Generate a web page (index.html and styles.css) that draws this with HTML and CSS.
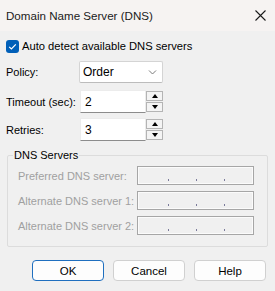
FILE: index.html
```html
<!DOCTYPE html>
<html>
<head>
<meta charset="utf-8">
<link rel="stylesheet" href="styles.css">
</head>
<body>
<div class="window">
  <div class="titlebar">
    <span class="title">Domain Name Server (DNS)</span>
    <svg class="close" width="11" height="11" viewBox="0 0 11 11"><path d="M0.5 0.5 L10.5 10.5 M10.5 0.5 L0.5 10.5" stroke="#1a1a1a" stroke-width="1.1" fill="none"/></svg>
  </div>
  <div class="content">
    <label class="check-row">
      <span class="checkbox"><svg width="13" height="13" viewBox="0 0 13 13"><path d="M3.2 6.8 L5.4 9 L9.8 4.3" stroke="#fff" stroke-width="1.2" fill="none"/></svg></span>
      <span class="check-label">Auto detect available DNS servers</span>
    </label>

    <div class="row row-policy">
      <span class="label">Policy:</span>
      <div class="select">
        <span>Order</span>
        <svg class="chev" width="9" height="5" viewBox="0 0 9 5"><path d="M1 0.5 L4.5 4 L8 0.5" stroke="#7a7a7a" stroke-width="1" fill="none"/></svg>
      </div>
    </div>

    <div class="row row-timeout">
      <span class="label">Timeout (sec):</span>
      <div class="spin">
        <div class="spin-input">2</div>
        <div class="spin-btns">
          <div class="spin-btn"><span class="tri-up"></span></div>
          <div class="spin-btn"><span class="tri-down"></span></div>
        </div>
      </div>
    </div>

    <div class="row row-retries">
      <span class="label">Retries:</span>
      <div class="spin">
        <div class="spin-input">3</div>
        <div class="spin-btns">
          <div class="spin-btn"><span class="tri-up"></span></div>
          <div class="spin-btn"><span class="tri-down"></span></div>
        </div>
      </div>
    </div>

    <fieldset class="group">
      <legend>DNS Servers</legend>
      <div class="ip-row">
        <span class="ip-label">Preferred DNS server:</span>
        <div class="ip-box"><i></i><i></i><i></i></div>
      </div>
      <div class="ip-row">
        <span class="ip-label">Alternate DNS server 1:</span>
        <div class="ip-box"><i></i><i></i><i></i></div>
      </div>
      <div class="ip-row">
        <span class="ip-label">Alternate DNS server 2:</span>
        <div class="ip-box"><i></i><i></i><i></i></div>
      </div>
    </fieldset>

    <div class="buttons">
      <div class="btn btn-default">OK</div>
      <div class="btn">Cancel</div>
      <div class="btn">Help</div>
    </div>
  </div>
</div>
</body>
</html>
```

FILE: styles.css
```css
html, body {
  margin: 0;
  padding: 0;
  background: #f0f0f0;
}
.window {
  width: 275px;
  height: 291px;
  background: #f0f0f0;
  font-family: "Liberation Sans", Arial, sans-serif;
  font-size: 11px;
  color: #000;
  overflow: hidden;
  box-sizing: border-box;
}
.titlebar {
  height: 31px;
  background: #f6f3f2;
  display: flex;
  align-items: center;
  justify-content: space-between;
  padding: 0 9px 0 6px;
  box-sizing: border-box;
}
.title {
  font-size: 11.6px;
  color: #1a1a1a;
  margin-top: -1px;
  white-space: nowrap;
}
.close {
  display: block;
  margin-top: -1px;
}
.content {
  padding: 0 6px;
}
.check-row {
  display: flex;
  align-items: center;
  height: 14px;
  margin-top: 8px;
}
.checkbox {
  width: 13px;
  height: 13px;
  background: #005fb8;
  border-radius: 3px;
  display: block;
  flex: none;
}
.checkbox svg { display: block; }
.check-label {
  margin-left: 3px;
  font-size: 11.2px;
  white-space: nowrap;
}
.row {
  display: flex;
  align-items: center;
}
.label {
  width: 73px;
  flex: none;
  white-space: nowrap;
}
.row-policy { margin-top: 8px; height: 22px; }
.row-timeout { margin-top: 7px; height: 23px; }
.row-retries { margin-top: 5px; height: 23px; }
.select {
  width: 84px;
  height: 22px;
  box-sizing: border-box;
  background: #fff;
  border: 1px solid #d4d4d4;
  border-bottom-color: #bcbcbc;
  border-radius: 2px;
  display: flex;
  align-items: center;
  justify-content: space-between;
  padding: 0 5px 0 3px;
  font-size: 12px;
}
.chev { display: block; }
.spin {
  display: flex;
  height: 23px;
  margin-left: 1px;
}
.spin-input {
  width: 66px;
  height: 23px;
  box-sizing: border-box;
  background: #fff;
  border: 1px solid #ececec;
  border-bottom: 1px solid #8c8c8c;
  padding: 1px 0 0 4px;
  display: flex;
  align-items: center;
  font-size: 12px;
}
.spin-btns {
  width: 17px;
  display: flex;
  flex-direction: column;
  gap: 1px;
  padding: 1px 0 1px 0;
  box-sizing: border-box;
}
.spin-btn {
  flex: 1;
  background: #f4f4f4;
  border: 1px solid #b4b4b4;
  display: flex;
  align-items: center;
  justify-content: center;
}
.tri-up {
  width: 0; height: 0;
  border-left: 3.5px solid transparent;
  border-right: 3.5px solid transparent;
  border-bottom: 4px solid #000;
}
.tri-down {
  width: 0; height: 0;
  border-left: 3.5px solid transparent;
  border-right: 3.5px solid transparent;
  border-top: 4px solid #000;
}
.group {
  margin: 7px 0 0 1px;
  width: 261px;
  height: 99px;
  box-sizing: border-box;
  border: 1px solid #dcdcdc;
  border-radius: 2px;
  padding: 4px 0 0 10px;
  font-size: 11px;
}
.group legend {
  padding: 0 1px;
  margin-left: -5px;
  line-height: 14px;
  font-size: 11px;
  color: #000;
}
.ip-row {
  display: flex;
  align-items: center;
  height: 19px;
  margin-bottom: 6px;
}
.ip-label {
  width: 119px;
  flex: none;
  color: #a0a0a0;
  white-space: nowrap;
}
.ip-box {
  width: 117px;
  height: 19px;
  box-sizing: border-box;
  border: 1px solid #a6a6a6;
  box-shadow: inset 0 0 0 1px #fbfbfb;
  position: relative;
}
.ip-box i {
  position: absolute;
  top: 12px;
  width: 1px;
  height: 2px;
  background: #7a7a9a;
}
.ip-box i:nth-child(1) { left: 30px; }
.ip-box i:nth-child(2) { left: 58px; }
.ip-box i:nth-child(3) { left: 86px; }
.buttons {
  display: flex;
  gap: 9px;
  margin: 13px 0 0 26px;
}
.btn {
  width: 72px;
  height: 21px;
  box-sizing: border-box;
  border: 1px solid #d0d0d0;
  border-radius: 4px;
  background: #fdfdfd;
  display: flex;
  align-items: center;
  justify-content: center;
  font-size: 11.5px;
}
.btn-default {
  border: 1px solid #1f6fbf;
}
```
